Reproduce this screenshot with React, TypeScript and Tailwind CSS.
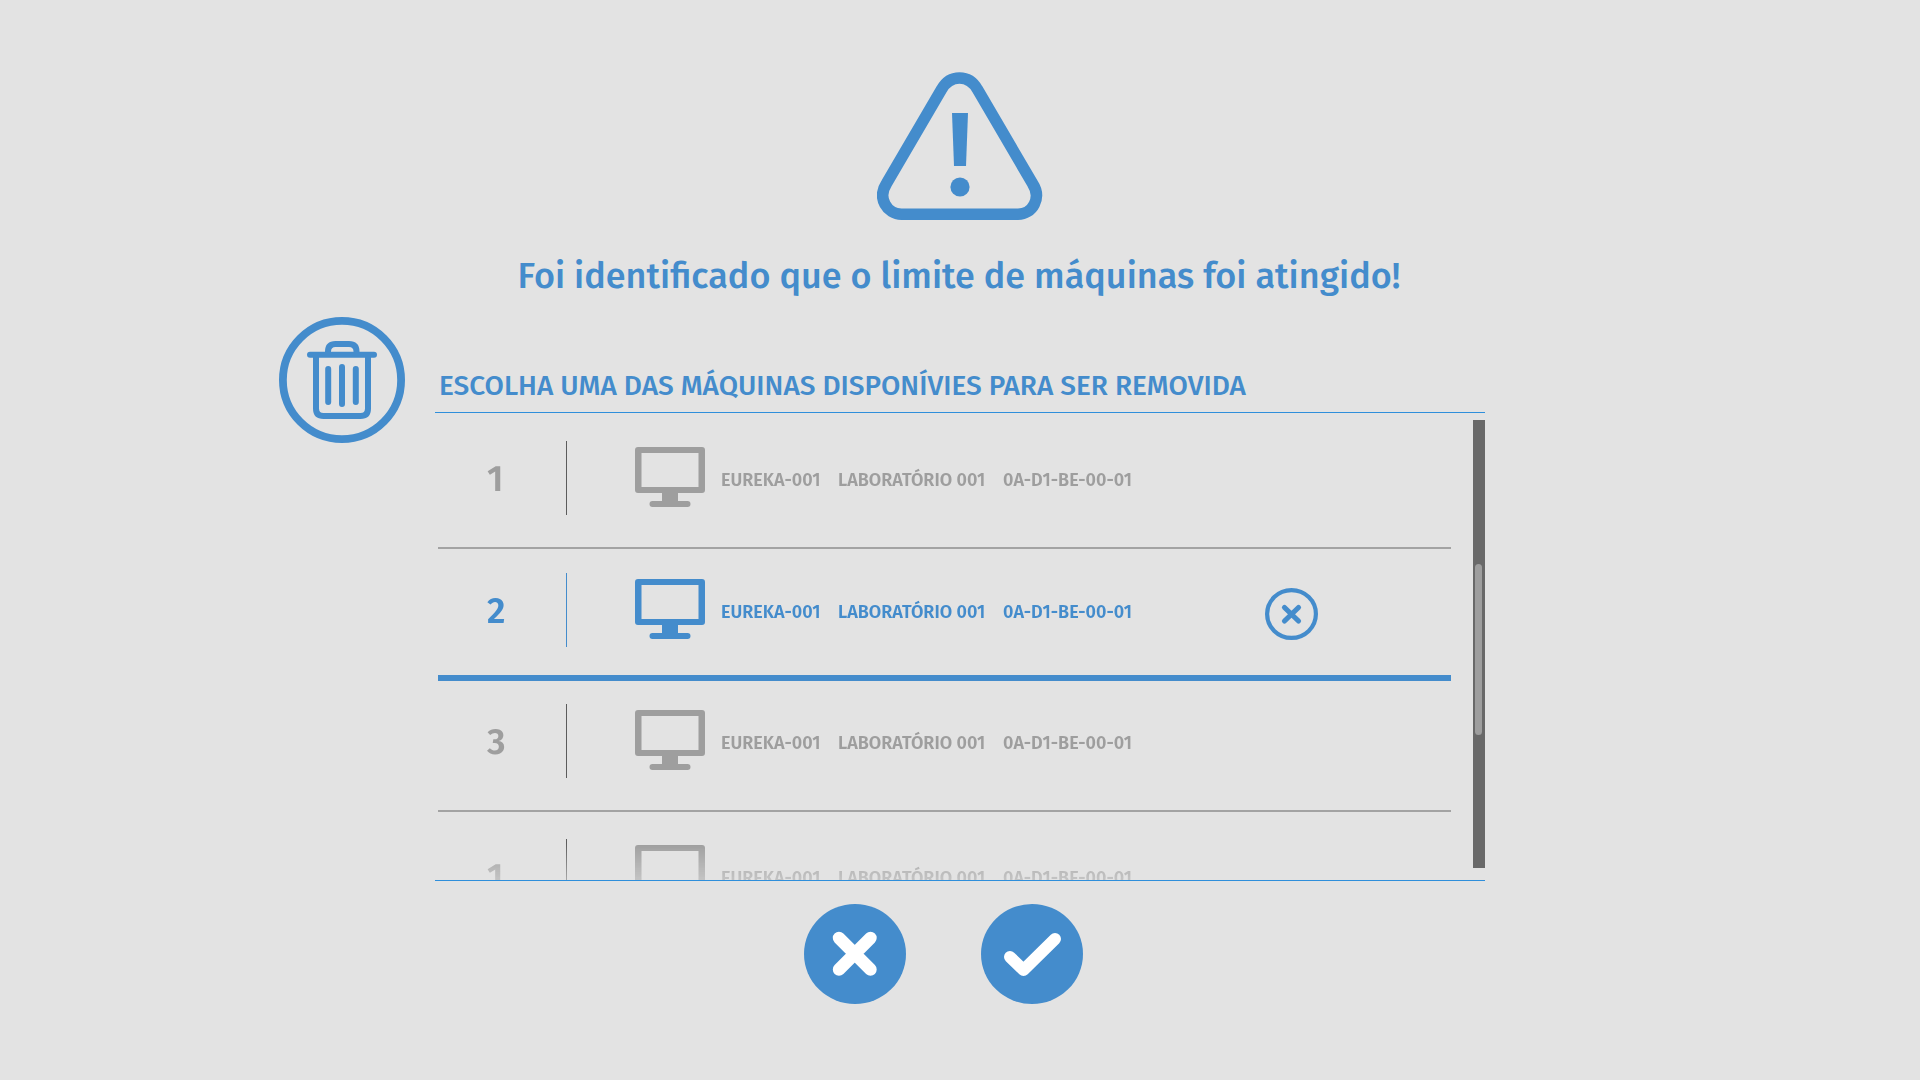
type Machine = {
  position: number;
  name: string;
  room: string;
  address: string;
  selected?: boolean;
  cell: string;
};

const machines: Machine[] = [
  { position: 1, name: "EUREKA-001", room: "LABORATÓRIO 001", address: "0A-D1-BE-00-01", cell: "h-[136px] pt-7 border-b-2 border-[#a3a3a3]" },
  { position: 2, name: "EUREKA-001", room: "LABORATÓRIO 001", address: "0A-D1-BE-00-01", selected: true, cell: "h-[132px] pt-6 border-b-6 border-[#448ccc]" },
  { position: 3, name: "EUREKA-001", room: "LABORATÓRIO 001", address: "0A-D1-BE-00-01", cell: "h-[131px] pt-[23px] border-b-2 border-[#a3a3a3]" },
  { position: 1, name: "EUREKA-001", room: "LABORATÓRIO 001", address: "0A-D1-BE-00-01", cell: "h-[136px] pt-[27px] border-b-2 border-[#a3a3a3]" },
];

function WarningIcon() {
  return (
    <svg width="166" height="148" viewBox="0 0 166 148" className="text-[#448ccc]" aria-hidden="true">
      <path
        d="M64.5 17.5C73 2.2 92 2.2 100.5 17.5L155.5 111.5C165 126 155.5 142.2 141 142.2H24.5C10 142.2 0 126 9.500 111.5Z"
        fill="none"
        stroke="currentColor"
        strokeWidth="11.5"
      />
      <path d="M75 41H91L89 94H77Z" fill="currentColor" />
      <circle cx="83" cy="115" r="9.6" fill="currentColor" />
    </svg>
  );
}

function TrashIcon() {
  return (
    <svg width="126" height="126" viewBox="0 0 126 126" fill="none" stroke="#448ccc" className="shrink-0" aria-hidden="true">
      <circle cx="63" cy="63" r="59.1" strokeWidth="7.8" />
      <path d="M31 37.8H95" strokeWidth="6" strokeLinecap="round" />
      <path d="M49 37V34.5Q49 27 56.500 27H70Q77.500 27 77.500 34.500V37" strokeWidth="6" />
      <path d="M37 39V91.500Q37 99 44.500 99H81.500Q89 99 89 91.500V39" strokeWidth="6" />
      <path d="M49.200 52V85M63 50V87M76.800 52V85" strokeWidth="6" strokeLinecap="round" />
    </svg>
  );
}

function MonitorIcon() {
  return (
    <svg width="70" height="60" viewBox="0 0 70 60" fill="currentColor" aria-hidden="true">
      <path
        fillRule="evenodd"
        d="M3 0H67Q70 0 70 3V43Q70 46 67 46H43V54H52.500A3 3 0 0 1 52.500 60H17.500A3 3 0 0 1 17.500 54H27V46H3Q0 46 0 43V3Q0 0 3 0ZM6.500 6V40H63.500V6Z"
      />
    </svg>
  );
}

function RemoveIcon() {
  return (
    <svg width="53" height="52" viewBox="0 0 53 52" fill="none" stroke="currentColor" aria-hidden="true">
      <ellipse cx="26.500" cy="26" rx="24.400" ry="23.900" strokeWidth="4.200" />
      <path d="M19.500 19.500L33.500 33M33.500 19.500L19.500 33" strokeWidth="5.200" strokeLinecap="round" />
    </svg>
  );
}

function MachineRow({ machine }: { machine: Machine }) {
  const tone = machine.selected ? "text-[#448ccc]" : "text-[#9e9e9e]";
  const rule = machine.selected ? "border-[#448ccc]" : "border-[#5c5c5c]";
  return (
    <tr className={tone}>
      <td className={`w-[129px] align-top ${machine.cell}`}>
        <div className={`flex h-[74px] items-center border-r pt-0.5 pl-[49px] text-[36px] leading-10 font-semibold ${rule}`}>
          {machine.position}
        </div>
      </td>
      <td className={`w-[154px] align-top ${machine.cell}`}>
        <div className="flex h-[74px] items-center pb-0.5 pl-[68px]">
          <MonitorIcon />
        </div>
      </td>
      <td className={`w-[117px] align-top ${machine.cell}`}>
        <div className="flex h-[74px] items-center pt-1">{machine.name}</div>
      </td>
      <td className={`w-[165px] align-top ${machine.cell}`}>
        <div className="flex h-[74px] items-center pt-1">{machine.room}</div>
      </td>
      <td className={`align-top ${machine.cell}`}>
        <div className="flex h-[74px] items-center pt-1">{machine.address}</div>
      </td>
      <td className={`w-[186px] align-top ${machine.cell}`}>
        {machine.selected && (
          <div className="flex h-[74px] items-center pt-2">
            <button type="button" aria-label="Remover máquina" className="cursor-pointer">
              <RemoveIcon />
            </button>
          </div>
        )}
      </td>
    </tr>
  );
}

export default function App() {
  return (
    <main className="flex min-h-screen flex-col items-center bg-[#e3e3e3] pt-[72px] font-['Fira_Sans','Roboto',sans-serif] text-[#448ccc]">
      <WarningIcon />
      <h1 className="mt-[34px] pr-0.5 text-[36px] leading-[44px] font-medium">
        Foi identificado que o limite de máquinas foi atingido!
      </h1>

      <section className="mt-[19px] grid w-full grid-cols-[126px_minmax(0,1050px)_126px] items-start justify-center gap-[30px]">
        <TrashIcon />
        <div className="pt-[51px]">
          <h2 className="pb-2 pl-1 text-[28px] leading-9 font-medium">
            ESCOLHA UMA DAS MÁQUINAS DISPONÍVIES PARA SER REMOVIDA
          </h2>
          <div className="flex h-[469px] justify-between border-y border-[#2f8fdb]">
            <div className="h-full w-full overflow-hidden pl-[3px] [mask-image:linear-gradient(to_bottom,#000_430px,rgb(0_0_0/0.45)_467px)]">
              <table className="w-full table-fixed border-separate border-spacing-0 text-left text-[18px] leading-6 font-semibold">
                <tbody>
                  {machines.map((machine, index) => (
                    <MachineRow key={index} machine={machine} />
                  ))}
                </tbody>
              </table>
            </div>
            <div className="mt-[7px] mb-3 ml-[22px] w-3 shrink-0 bg-[#696969] pt-36 pl-0.5">
              <div className="h-[171px] w-[7px] rounded-full bg-[#9e9e9e]" />
            </div>
          </div>
        </div>
      </section>

      <div className="mt-[23px] flex gap-[75px] pr-[33px]">
        <button type="button" aria-label="Cancelar" className="cursor-pointer">
          <svg width="102" height="100" viewBox="0 0 102 100" aria-hidden="true">
            <ellipse cx="51" cy="50" rx="51" ry="50" fill="#448ccc" />
            <path d="M35 34L66.500 65.500M66.500 34L35 65.500" stroke="#fff" strokeWidth="12.400" strokeLinecap="round" />
          </svg>
        </button>
        <button type="button" aria-label="Confirmar" className="cursor-pointer">
          <svg width="102" height="100" viewBox="0 0 102 100" aria-hidden="true">
            <ellipse cx="51" cy="50" rx="51" ry="50" fill="#448ccc" />
            <path d="M29 53L42.500 66L74 35" fill="none" stroke="#fff" strokeWidth="12" strokeLinecap="round" strokeLinejoin="round" />
          </svg>
        </button>
      </div>
    </main>
  );
}
